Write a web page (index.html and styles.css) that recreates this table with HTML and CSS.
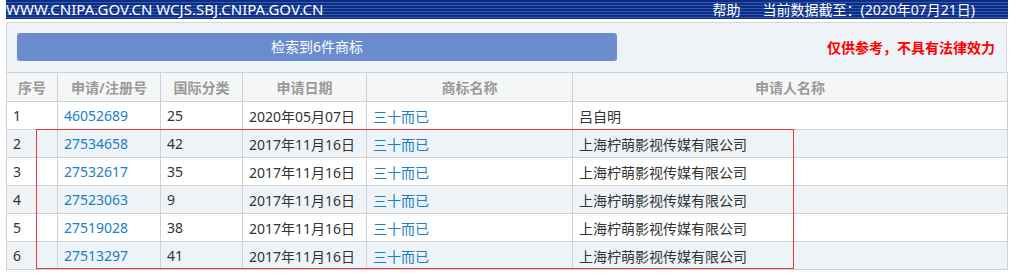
FILE: index.html
```html
<!DOCTYPE html>
<html lang="zh">
<head>
<meta charset="utf-8">
<title>商标检索</title>
<link rel="stylesheet" href="styles.css">
</head>
<body>
<div class="page">
  <div class="topbar">
    <span class="site">WWW.CNIPA.GOV.CN WCJS.SBJ.CNIPA.GOV.CN</span>
    <span class="right"><span class="help">帮助</span><span class="date">当前数据截至：(2020年07月21日)</span></span>
  </div>
  <div class="panel">
    <div class="toolbar">
      <div class="btn">检索到6件商标</div>
      <div class="notice">仅供参考，不具有法律效力</div>
    </div>
    <table class="grid">
      <colgroup>
        <col class="c1"><col class="c2"><col class="c3"><col class="c4"><col class="c5"><col class="c6">
      </colgroup>
      <thead>
        <tr><th>序号</th><th>申请/注册号</th><th>国际分类</th><th>申请日期</th><th>商标名称</th><th>申请人名称</th></tr>
      </thead>
      <tbody>
        <tr><td>1</td><td class="link">46052689</td><td>25</td><td>2020年05月07日</td><td class="link">三十而已</td><td>吕自明</td></tr>
        <tr><td>2</td><td class="link">27534658</td><td>42</td><td>2017年11月16日</td><td class="link">三十而已</td><td>上海柠萌影视传媒有限公司</td></tr>
        <tr><td>3</td><td class="link">27532617</td><td>35</td><td>2017年11月16日</td><td class="link">三十而已</td><td>上海柠萌影视传媒有限公司</td></tr>
        <tr><td>4</td><td class="link">27523063</td><td>9</td><td>2017年11月16日</td><td class="link">三十而已</td><td>上海柠萌影视传媒有限公司</td></tr>
        <tr><td>5</td><td class="link">27519028</td><td>38</td><td>2017年11月16日</td><td class="link">三十而已</td><td>上海柠萌影视传媒有限公司</td></tr>
        <tr><td>6</td><td class="link">27513297</td><td>41</td><td>2017年11月16日</td><td class="link">三十而已</td><td>上海柠萌影视传媒有限公司</td></tr>
      </tbody>
    </table>
    <div class="mark"></div>
  </div>
</div>
</body>
</html>
```

FILE: styles.css
```css
html, body {
  margin: 0;
  padding: 0;
  background: #ffffff;
}
body {
  font-family: "Noto Sans", "Noto Sans CJK SC", sans-serif;
  font-size: 14px;
  color: #333333;
}
.page {
  margin-left: 6px;
  width: 1002px;
}
.topbar {
  height: 19px;
  display: flex;
  align-items: center;
  justify-content: space-between;
  color: #ffffff;
  background: repeating-linear-gradient(to bottom, #0c2d86 0px, #0c2d86 2px, #3359aa 2px, #3359aa 3px);
  line-height: 19px;
}
.site {
  font-size: 15px;
}
.right {
  display: flex;
  gap: 22px;
  padding-right: 33px;
  font-size: 14px;
}
.panel {
  position: relative;
  margin-top: 3px;
  width: 1001px;
  background: #eef3f8;
  border-top: 1px solid #d4d4d4;
  border-left: 1px solid #d4d4d4;
  border-right: 1px solid #d4d4d4;
  box-sizing: border-box;
}
.toolbar {
  display: flex;
  align-items: center;
  justify-content: space-between;
  padding: 10px 11px 11px 10px;
}
.btn {
  width: 600px;
  height: 28px;
  line-height: 28px;
  border-radius: 3px;
  background: #6b8dd0;
  color: #ffffff;
  text-align: center;
}
.notice {
  color: #ff0000;
  font-weight: bold;
}
.grid {
  width: 1001px;
  margin-left: -1px;
  border-collapse: collapse;
  table-layout: fixed;
}
.c1 { width: 51px; }
.c2 { width: 103px; }
.c3 { width: 82px; }
.c4 { width: 124px; }
.c5 { width: 206px; }
.c6 { width: 435px; }
.grid th, .grid td {
  border: 1px solid #d0d0d0;
  height: 27px;
  padding: 0 0 0 6px;
  text-align: left;
  white-space: nowrap;
  overflow: hidden;
}
.grid th {
  height: 28px;
  background: #f5f7f7;
  color: #999999;
  font-weight: bold;
  text-align: center;
  padding: 0;
}
.grid tbody tr:nth-child(odd) td { background: #ffffff; }
.grid tbody tr:nth-child(even) td { background: #eef3f8; }
.grid td.link { color: #1a7fc6; }
.mark {
  position: absolute;
  left: 29px;
  top: 106px;
  width: 758px;
  height: 140px;
  border: 1px solid #e8383d;
  box-sizing: border-box;
  pointer-events: none;
}
```
